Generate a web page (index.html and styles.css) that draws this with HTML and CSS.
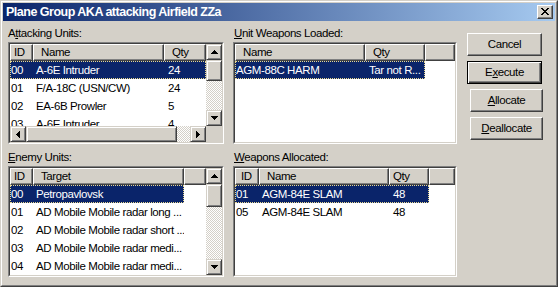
FILE: index.html
```html
<!DOCTYPE html>
<html>
<head>
<meta charset="utf-8">
<link rel="stylesheet" href="styles.css">
</head>
<body>
<div class="window">
  <div class="window-inner">
    <div class="titlebar">
      <span class="title">Plane Group AKA attacking Airfield ZZa</span>
      <div class="close">
        <svg width="8" height="7" viewBox="0 0 8 7"><path d="M0 0h2v1h1v1h2V1h1V0h2v1H7v1H6v1H5v1h1v1h1v1h1v1H6V6H5V5H3v1H2v1H0V6h1V5h1V4h1V3H2V2H1V1H0z" fill="#000"/></svg>
      </div>
    </div>
    <div class="body">
      <div class="group g-top-left">
        <div class="label">A<u>t</u>tacking Units:</div>
        <div class="lv lv-top">
          <div class="lv-in lv-atk">
            <div class="lv-content">
              <div class="hdr cols-atk">
                <div class="hc hc-id">ID</div>
                <div class="hc">Name</div>
                <div class="hc">Qty</div>
              </div>
              <div class="row cols-atk sel">
                <div class="c c-first">00</div>
                <div class="c c-name">A-6E Intruder</div>
                <div class="c">24</div>
              </div>
              <div class="row cols-atk">
                <div class="c c-first">01</div>
                <div class="c c-name">F/A-18C (USN/CW)</div>
                <div class="c">24</div>
              </div>
              <div class="row cols-atk">
                <div class="c c-first">02</div>
                <div class="c c-name">EA-6B Prowler</div>
                <div class="c">5</div>
              </div>
              <div class="row cols-atk">
                <div class="c c-first">03</div>
                <div class="c c-name">A-6E Intruder</div>
                <div class="c">4</div>
              </div>
            </div>
            <div class="vscroll">
              <div class="sbtn"><svg width="7" height="4" viewBox="0 0 7 4"><path d="M3 0h1v1h1v1h1v1h1v1H0V3h1V2h1V1h1z"/></svg></div>
              <div class="thumb thumb-v-atk"></div>
              <div class="track"></div>
              <div class="sbtn"><svg width="7" height="4" viewBox="0 0 7 4"><path d="M0 0h7v1h-1v1h-1v1h-1v1H3V3H2V2H1V1H0z"/></svg></div>
            </div>
            <div class="hscroll">
              <div class="sbtn"><svg width="4" height="7" viewBox="0 0 4 7"><path d="M4 0v7h-1v-1h-1v-1h-1v-1H0V3h1V2h1V1h1V0z"/></svg></div>
              <div class="thumb thumb-h"></div>
              <div class="track"></div>
              <div class="sbtn"><svg width="4" height="7" viewBox="0 0 4 7"><path d="M0 0h1v1h1v1h1v1h1v1h-1v1h-1v1h-1v1H0z"/></svg></div>
            </div>
            <div class="corner"></div>
          </div>
        </div>
      </div>

      <div class="group g-top-mid">
        <div class="label"><u>U</u>nit Weapons Loaded:</div>
        <div class="lv lv-top">
          <div class="lv-in lv-plain">
            <div class="hdr cols-load">
              <div class="hc">Name</div>
              <div class="hc">Qty</div>
              <div class="hc"></div>
            </div>
            <div class="row cols-load-row sel">
              <div class="c c-first">AGM-88C HARM</div>
              <div class="c">Tar not R...</div>
            </div>
          </div>
        </div>
      </div>

      <div class="buttons">
        <div class="btn">Cancel</div>
        <div class="btn default">E<u>x</u>ecute</div>
        <div class="btn indent"><u>A</u>llocate</div>
        <div class="btn indent"><u>D</u>eallocate</div>
      </div>

      <div class="group g-bot-left">
        <div class="label"><u>E</u>nemy Units:</div>
        <div class="lv lv-bot">
          <div class="lv-in lv-enemy">
            <div class="lv-content">
              <div class="hdr cols-enemy">
                <div class="hc hc-id">ID</div>
                <div class="hc">Target</div>
                <div class="hc"></div>
              </div>
              <div class="row cols-enemy-row sel">
                <div class="c c-first">00</div>
                <div class="c c-name">Petropavlovsk</div>
              </div>
              <div class="row cols-enemy-row">
                <div class="c c-first">01</div>
                <div class="c c-name">AD Mobile Mobile radar long ...</div>
              </div>
              <div class="row cols-enemy-row">
                <div class="c c-first">02</div>
                <div class="c c-name">AD Mobile Mobile radar short ...</div>
              </div>
              <div class="row cols-enemy-row">
                <div class="c c-first">03</div>
                <div class="c c-name">AD Mobile Mobile radar medi...</div>
              </div>
              <div class="row cols-enemy-row">
                <div class="c c-first">04</div>
                <div class="c c-name">AD Mobile Mobile radar medi...</div>
              </div>
            </div>
            <div class="vscroll">
              <div class="sbtn"><svg width="7" height="4" viewBox="0 0 7 4"><path d="M3 0h1v1h1v1h1v1h1v1H0V3h1V2h1V1h1z"/></svg></div>
              <div class="thumb thumb-v-enemy"></div>
              <div class="track"></div>
              <div class="sbtn"><svg width="7" height="4" viewBox="0 0 7 4"><path d="M0 0h7v1h-1v1h-1v1h-1v1H3V3H2V2H1V1H0z"/></svg></div>
            </div>
          </div>
        </div>
      </div>

      <div class="group g-bot-mid">
        <div class="label"><u>W</u>eapons Allocated:</div>
        <div class="lv lv-bot">
          <div class="lv-in lv-plain">
            <div class="hdr cols-alloc">
              <div class="hc hc-id2">ID</div>
              <div class="hc">Name</div>
              <div class="hc hc-qty2">Qty</div>
              <div class="hc"></div>
            </div>
            <div class="row cols-alloc-row sel">
              <div class="c c-first">01</div>
              <div class="c c-name">AGM-84E SLAM</div>
              <div class="c">48</div>
            </div>
            <div class="row cols-alloc-row">
              <div class="c c-first">05</div>
              <div class="c c-name">AGM-84E SLAM</div>
              <div class="c">48</div>
            </div>
          </div>
        </div>
      </div>
    </div>
  </div>
</div>
</body>
</html>
```

FILE: styles.css
```css
* { box-sizing: border-box; }

body {
  margin: 0;
  background: #d4d0c8;
  font-family: "Liberation Sans", Arial, sans-serif;
  font-size: 11.5px;
  letter-spacing: -0.4px;
  color: #000;
}

.window {
  width: 558px;
  height: 287px;
  background: #d4d0c8;
  border: 1px solid;
  border-color: #d4d0c8 #404040 #404040 #d4d0c8;
}

.window-inner {
  height: 100%;
  border: 1px solid;
  border-color: #fff #808080 #808080 #fff;
  padding: 1px;
  display: flex;
  flex-direction: column;
}

.titlebar {
  height: 18px;
  flex: none;
  background: linear-gradient(to right, #0a246a, #a6caf0);
  display: flex;
  align-items: center;
  padding: 0 2px 0 3px;
}

.title {
  flex: 1;
  color: #fff;
  font-weight: bold;
  font-size: 12.5px;
  letter-spacing: -0.5px;
  line-height: 18px;
  white-space: nowrap;
}

.close {
  width: 16px;
  height: 14px;
  background: #d4d0c8;
  border: 1px solid;
  border-color: #fff #404040 #404040 #fff;
  box-shadow: inset -1px -1px #808080;
  display: flex;
  align-items: center;
  justify-content: center;
  padding-bottom: 1px;
}
.close svg { display: block; }

.body {
  flex: 1;
  display: grid;
  grid-template-columns: 216px 224px 76px;
  grid-template-rows: 118px auto;
  column-gap: 9px;
  row-gap: 6px;
  padding: 5px 0 0 5px;
}

.g-top-left { grid-column: 1; grid-row: 1; }
.g-top-mid { grid-column: 2; grid-row: 1; }
.buttons { grid-column: 3; grid-row: 1 / span 2; }
.g-bot-left { grid-column: 1; grid-row: 2; }
.g-bot-mid { grid-column: 2; grid-row: 2; }

.label {
  height: 14px;
  line-height: 14px;
  margin-bottom: 2px;
  white-space: nowrap;
}
.g-top-mid .label, .g-bot-mid .label { padding-left: 1px; }

.lv {
  border: 1px solid;
  border-color: #808080 #fff #fff #808080;
}
.lv-top { height: 102px; }
.lv-bot { height: 111px; }

.lv-in {
  height: 100%;
  border: 1px solid;
  border-color: #404040 #d4d0c8 #d4d0c8 #404040;
  background: #fff;
  overflow: hidden;
}

.lv-atk {
  display: grid;
  grid-template-columns: 1fr 16px;
  grid-template-rows: 1fr 16px;
}
.lv-enemy {
  display: grid;
  grid-template-columns: 1fr 16px;
  grid-template-rows: 1fr;
}
.lv-content { overflow: hidden; min-height: 0; }

.hdr {
  display: grid;
  height: 17px;
  background: #d4d0c8;
}
.hc {
  height: 17px;
  line-height: 15px;
  border: 1px solid;
  border-color: #fff #404040 #404040 #fff;
  box-shadow: inset -1px -1px #808080;
  padding-left: 7px;
  white-space: nowrap;
  overflow: hidden;
}
.hc-id { padding-left: 3px; }
.hc-id2 { padding-left: 5px; }
.hc-qty2 { padding-left: 3px; }

.cols-atk { grid-template-columns: 23px 131px 42px; }
.cols-load { grid-template-columns: 130px 60px 1fr; }
.cols-load-row { grid-template-columns: 130px 60px; }
.cols-enemy { grid-template-columns: 23px 151px 1fr; }
.cols-enemy-row { grid-template-columns: 23px 151px; }
.cols-alloc { grid-template-columns: 24px 130px 40px 1fr; }
.cols-alloc-row { grid-template-columns: 24px 130px 40px; }

.row {
  display: grid;
  width: max-content;
  height: 18px;
  line-height: 18px;
}
.row.sel {
  background: #0a246a;
  color: #fff;
  outline: 1px dotted #e8d890;
  outline-offset: -1px;
}
.c {
  padding-left: 4px;
  white-space: nowrap;
  overflow: hidden;
}
.c-first { padding-left: 1px; }
.c-name { padding-left: 3px; }

.vscroll {
  display: flex;
  flex-direction: column;
  min-height: 0;
}
.hscroll {
  display: flex;
  flex-direction: row;
}
.corner { background: #d4d0c8; }

.sbtn, .thumb {
  flex: none;
  background: #d4d0c8;
  border: 1px solid;
  border-color: #d4d0c8 #404040 #404040 #d4d0c8;
  box-shadow: inset 1px 1px #fff, inset -1px -1px #808080;
}
.sbtn {
  width: 16px;
  height: 16px;
  display: flex;
  align-items: center;
  justify-content: center;
}
.sbtn svg { display: block; fill: #000; }

.thumb-v-atk { height: 21px; }
.thumb-v-enemy { height: 23px; }
.thumb-h { width: 151px; height: 16px; }

.track {
  flex: 1;
  background-color: #fff;
  background-image: conic-gradient(#d4d0c8 25%, #fff 0 50%, #d4d0c8 0 75%, #fff 0);
  background-size: 2px 2px;
}

.buttons {
  display: flex;
  flex-direction: column;
  gap: 5px;
  padding-top: 7px;
  padding-left: 1px;
}
.btn {
  width: 75px;
  height: 23px;
  line-height: 21px;
  text-align: center;
  background: #d4d0c8;
  border: 1px solid;
  border-color: #fff #404040 #404040 #fff;
  box-shadow: inset -1px -1px #808080;
  white-space: nowrap;
}
.btn.default {
  border-color: #000;
  box-shadow: inset 1px 1px #fff, inset -1px -1px #404040, inset -2px -2px #808080;
}
.btn.indent { margin-left: 3px; width: 73px; }
```
